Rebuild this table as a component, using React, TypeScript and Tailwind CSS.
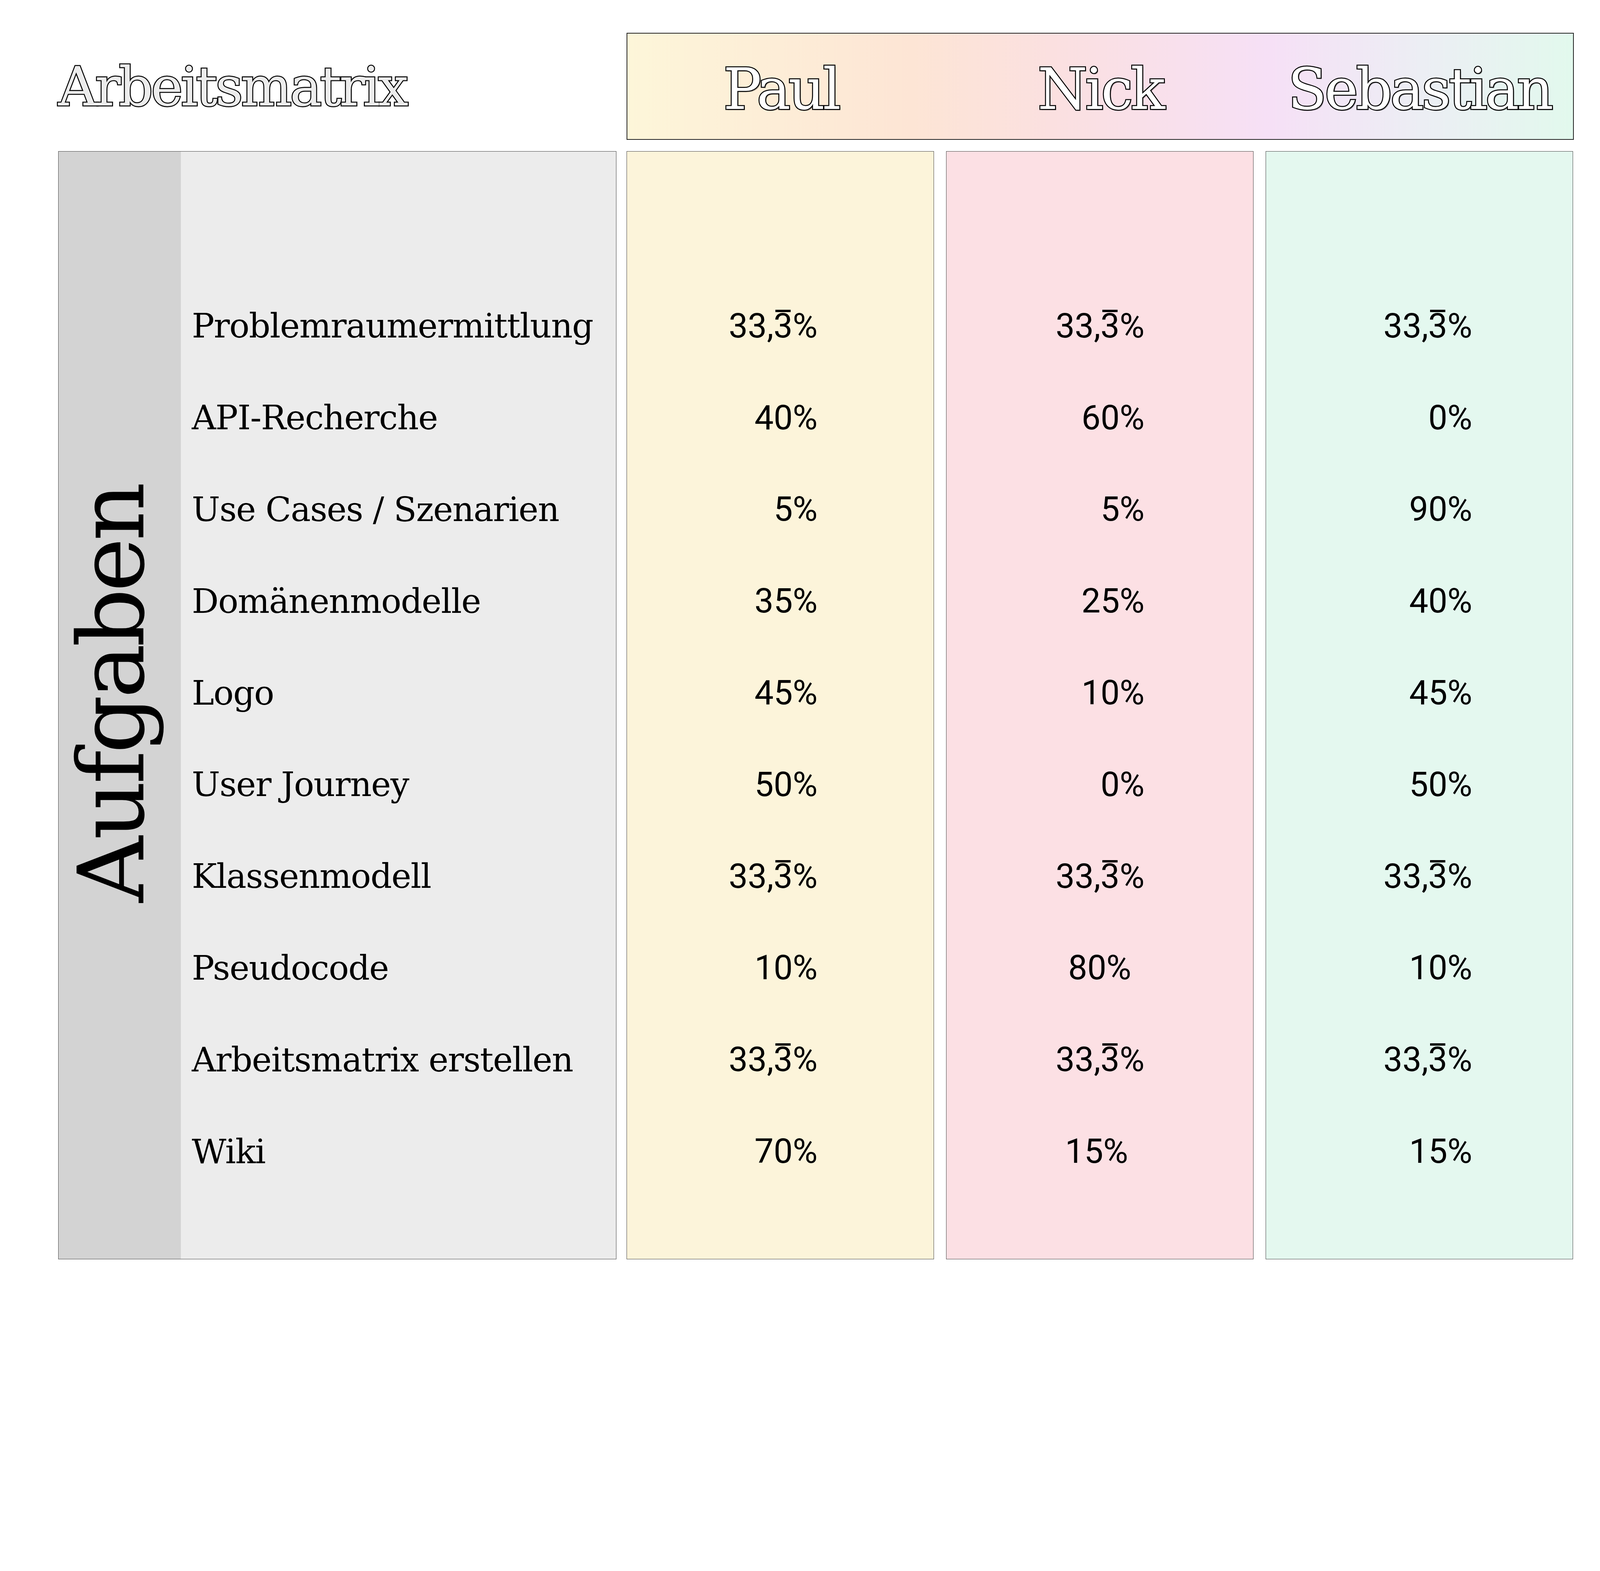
import React from 'react'

const SERIF = { fontFamily: '"DejaVu Serif", "Liberation Serif", serif' }
const SANS = { fontFamily: 'Roboto, "Liberation Sans", sans-serif' }

type Person = {
  name: string
  bg: string
  pr: string
  values: string[]
}

const TASKS = [
  'Problemraumermittlung',
  'API-Recherche',
  'Use Cases / Szenarien',
  'Domänenmodelle',
  'Logo',
  'User Journey',
  'Klassenmodell',
  'Pseudocode',
  'Arbeitsmatrix erstellen',
  'Wiki',
]

const PEOPLE: Person[] = [
  {
    name: 'Paul',
    bg: 'bg-[#fcf4da]',
    pr: 'pr-[297px]',
    values: ['33,3', '40%', '5%', '35%', '45%', '50%', '33,3', '10%', '33,3', '70%'],
  },
  {
    name: 'Nick',
    bg: 'bg-[#fce0e4]',
    pr: 'pr-[278px]',
    values: ['33,3', '60%', '5%', '25%', '10%', '0%', '33,3', '80%', '33,3', '15%'],
  },
  {
    name: 'Sebastian',
    bg: 'bg-[#e4f8ef]',
    pr: 'pr-[257px]',
    values: ['33,3', '0%', '90%', '40%', '45%', '50%', '33,3', '10%', '33,3', '15%'],
  },
]

// a few cells in Nick's column sit further left in the original
const NUDGE: Record<string, string> = {
  'Nick-7': 'mr-[34px]',
  'Nick-9': 'mr-[42px]',
}

function Repeating() {
  // 33,3̄% with the repeat bar over the last digit
  return (
    <span>
      33,
      <span className="relative inline-block">
        3
        <span className="absolute left-[5px] right-[5px] top-[2px] h-[6px] bg-black" />
      </span>
      %
    </span>
  )
}

function ValueColumn({ p }: { p: Person }) {
  return (
    <div className={`w-[787px] border-[1.5px] border-[#444] ${p.bg} pt-[329px]`}>
      {p.values.map((v, i) => (
        <div
          key={i}
          className={`flex h-[234.8px] items-center justify-end ${p.pr} text-[87px] leading-none text-black`}
          style={SANS}
        >
          <span className={NUDGE[`${p.name}-${i}`] ?? ''}>{v === '33,3' ? <Repeating /> : v}</span>
        </div>
      ))}
    </div>
  )
}

export default function App() {
  return (
    <div className="h-[3369px] w-[4096px] bg-white pl-[149px] pt-[84px]">
      {/* header row */}
      <div className="flex h-[274px]">
        <div className="flex w-[1455px] items-center pt-[4px]">
          <h1
            className="text-[138px] leading-none tracking-[-5.5px] text-[#ececec] [-webkit-text-stroke:5px_black] [paint-order:stroke_fill]"
            style={SERIF}
          >
            Arbeitsmatrix
          </h1>
        </div>
        <div className="flex w-[2425px] gap-[31px] border-2 border-[#222] bg-[linear-gradient(90deg,#fdf6d9_0%,#fde5d5_30%,#fbe0e0_45%,#f6e0f6_68%,#eceef4_84%,#e2f9ed_100%)]">
          {PEOPLE.map((p) => (
            <div key={p.name} className="flex w-[787px] items-center justify-center pt-[14px]">
              <span
                className="text-[146px] leading-none tracking-[-6px] text-white [-webkit-text-stroke:5px_black] [paint-order:stroke_fill] [text-shadow:3px_3px_0_rgba(0,0,0,0.35)]"
                style={SERIF}
              >
                {p.name}
              </span>
            </div>
          ))}
        </div>
      </div>

      {/* body row */}
      <div className="mt-[29px] flex h-[2837px]">
        <div className="flex w-[1429px] border-[1.5px] border-[#444] bg-[#ececec]">
          <div className="flex w-[313px] items-center justify-center bg-[#d3d3d3] pb-[58px] pr-[42px]">
            <span
              className="rotate-180 text-[235px] leading-none tracking-[-9px] text-black [writing-mode:vertical-rl]"
              style={SERIF}
            >
              Aufgaben
            </span>
          </div>
          <div className="flex-1 pl-[28px] pt-[329px]">
            {TASKS.map((t) => (
              <div
                key={t}
                className="flex h-[234.8px] items-center text-[86px] leading-none tracking-[-1.5px] text-black"
                style={SERIF}
              >
                {t}
              </div>
            ))}
          </div>
        </div>

        <div className="ml-[26px] flex gap-[31px]">
          {PEOPLE.map((p) => (
            <ValueColumn key={p.name} p={p} />
          ))}
        </div>
      </div>
    </div>
  )
}
